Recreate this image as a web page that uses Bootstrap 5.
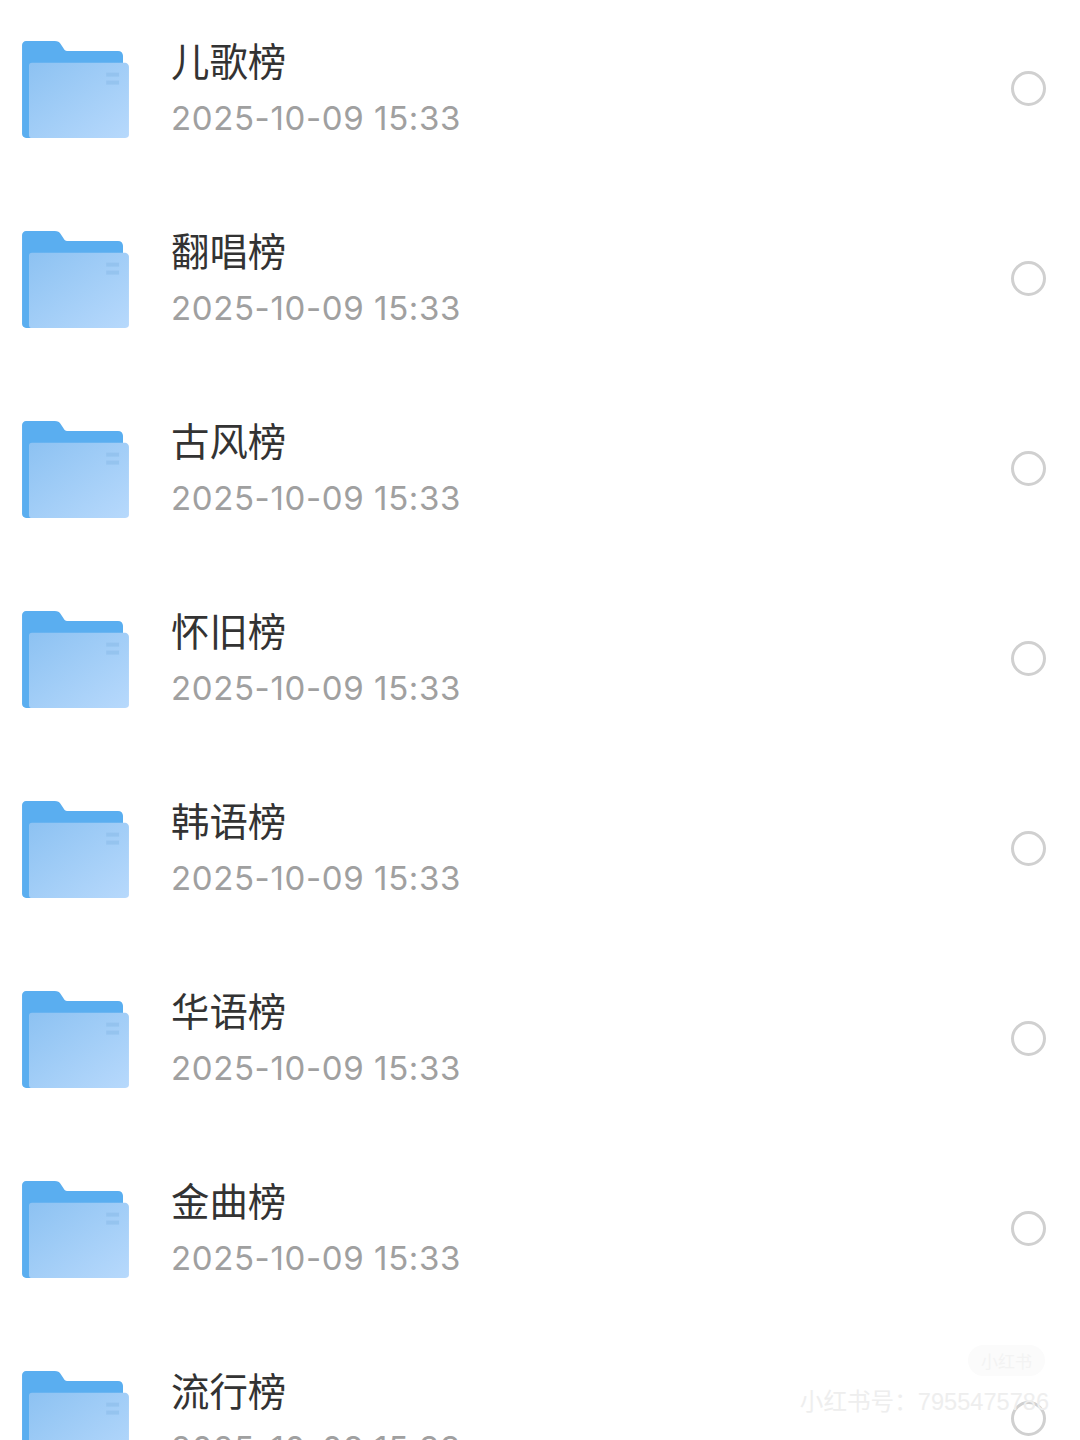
<!DOCTYPE html>
<html lang="zh-CN">
<head>
  <meta charset="UTF-8" />
  <meta name="viewport" content="width=device-width, initial-scale=1" />
  <title>榜单文件夹</title>
  <link href="https://cdn.jsdelivr.net/npm/bootstrap@5.3.2/dist/css/bootstrap.min.css" rel="stylesheet" />
  <style>
    html, body {
      height: 1440px;
      overflow: hidden;
      background: #fff;
    }
    .file-list {
      margin-top: -7px;
    }
    .file-row {
      height: 190px;
      padding: 0 34px 0 22px;
    }
    .folder-icon {
      width: 107px;
      height: 97px;
      margin-right: 42px;
      margin-top: 2px;
    }
    .file-name {
      font: 400 38.4px/56px "Noto Sans CJK SC", sans-serif;
      color: #333;
      margin: -1px 0 1px;
    }
    .file-date {
      font: 400 33px/56px Inter, "Liberation Sans", sans-serif;
      letter-spacing: .62px;
      color: #a0a0a0;
      padding-top: 2px;
      margin-bottom: -2px;
    }
    .pick-ring {
      width: 35px;
      height: 35px;
      border: 3.5px solid #d0d0d0;
    }
    .mark-id {
      right: 31px;
      top: 1388px;
      font: 400 23.6px/28px "Liberation Sans", "Noto Sans CJK SC", sans-serif;
      color: #eeeeee;
    }
    .mark-pill {
      left: 968px;
      top: 1345px;
      width: 77px;
      height: 31px;
      background: #fbfbfb;
      font: 400 17px/31px "Noto Sans CJK SC", sans-serif;
      color: #f3f3f3;
    }
  </style>
</head>
<body>

  <svg width="0" height="0" class="position-absolute">
    <defs>
      <linearGradient id="frontFill" x1="0" y1="0" x2="1" y2="1">
        <stop offset="0" stop-color="#8dc2f2" />
        <stop offset="1" stop-color="#b7d9fc" />
      </linearGradient>
      <symbol id="folder" viewBox="0 0 108 98">
        <path fill="#5aaef0" d="M4 0H33C36 0 38 1 39 3L43 9C44 10 45 10 46 10H97C100 10 102 12 102 15V94C102 96 100 98 98 98H4C2 98 0 96 0 94V4C0 2 2 0 4 0Z" />
        <path fill="url(#frontFill)" d="M10 22H104C106 22 108 24 108 26V95C108 97 106 98 104 98H9C8 98 7 97 7 95V25C7 23 8 22 10 22Z" />
        <rect x="85" y="32" width="13" height="4" fill="#8fbfeb" opacity=".7" />
        <rect x="85" y="40" width="13" height="4" fill="#8fbfeb" opacity=".7" />
      </symbol>
    </defs>
  </svg>

  <div class="file-list d-flex flex-column" id="fileList"></div>

  <div class="mark-pill position-absolute rounded-pill text-center">小红书</div>
  <div class="mark-id position-absolute">小红书号：7955475786</div>

  <script>
    const names = ["儿歌榜", "翻唱榜", "古风榜", "怀旧榜", "韩语榜", "华语榜", "金曲榜", "流行榜"];
    document.getElementById("fileList").innerHTML = names.map(name => `
      <div class="file-row d-flex align-items-center flex-shrink-0">
        <svg class="folder-icon flex-shrink-0"><use href="#folder" /></svg>
        <div class="flex-grow-1">
          <div class="file-name">${name}</div>
          <div class="file-date">2025-10-09 15:33</div>
        </div>
        <div class="pick-ring rounded-circle flex-shrink-0"></div>
      </div>`).join("");
  </script>
  <script src="https://cdn.jsdelivr.net/npm/bootstrap@5.3.2/dist/js/bootstrap.bundle.min.js"></script>
</body>
</html>
